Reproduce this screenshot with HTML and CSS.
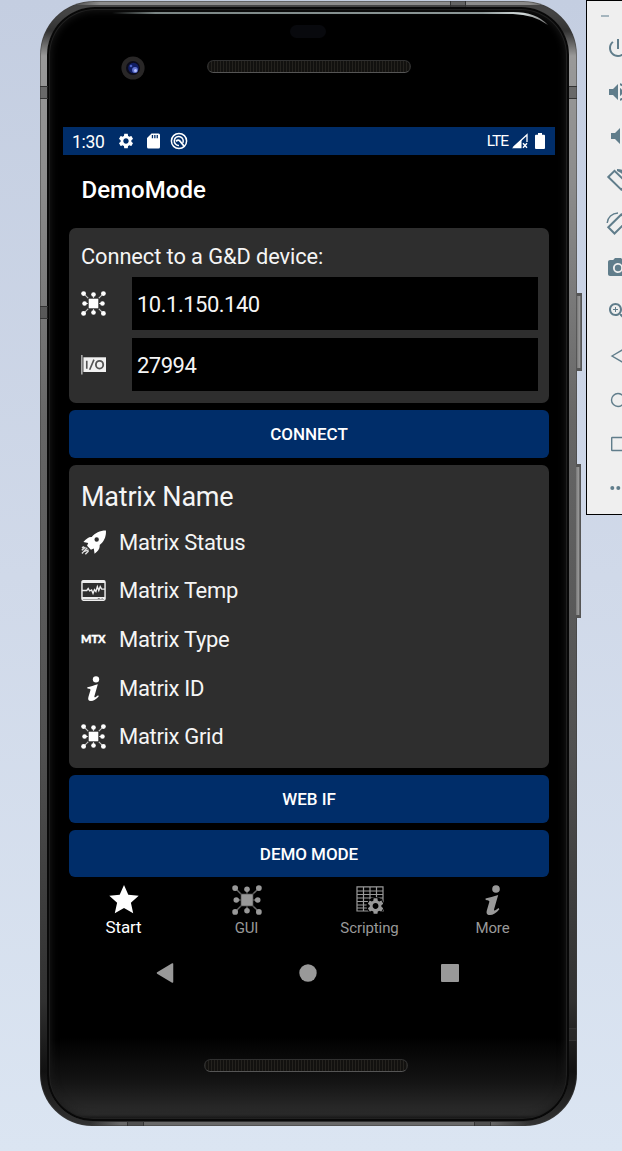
FILE: index.html
```html
<!DOCTYPE html>
<html lang="en">
<head>
<meta charset="utf-8">
<title>DemoMode</title>
<link rel="stylesheet" href="styles.css">
</head>
<body>
<svg class="defs" aria-hidden="true">
  <symbol id="hub" viewBox="0 0 26 26">
    <path d="M3 3l20 20M23 3L3 23M13 3v20M3 13h20" stroke="currentColor" stroke-width="1.200" opacity=".7"/>
    <path class="hub-gap" d="M7.300 7.300h11.400v11.400H7.300z"/>
    <path d="M8 8h10v10H8z" fill="currentColor"/>
    <g fill="currentColor"><circle cx="2.700" cy="2.700" r="2.500"/><circle cx="23.300" cy="2.700" r="2.500"/><circle cx="2.700" cy="23.300" r="2.500"/><circle cx="23.300" cy="23.300" r="2.500"/><circle cx="13" cy="3.700" r="2.400"/><circle cx="13" cy="22.300" r="2.400"/><circle cx="3.700" cy="13" r="2.400"/><circle cx="22.300" cy="13" r="2.400"/></g>
  </symbol>
  <symbol id="info" viewBox="0 0 26 26">
    <circle cx="15.600" cy="3.500" r="3.300" fill="currentColor"/>
    <path d="M6.500 11.600c3.200-.3 7.200-1.800 11-2.900L14 20.700c-.4 1.500.4 1.700 1.700.8l2.100-1.500.7 1c-2.500 3.200-5.500 5-8.200 5-2.700 0-3.300-1.800-2.600-4.200l2.100-7c.3-1.200-.4-1.700-3.100-1.900z" fill="currentColor"/>
  </symbol>
  <symbol id="gear" viewBox="0 0 24 24">
    <path fill="currentColor" d="M19.14 12.94c.04-.3.06-.61.06-.94 0-.32-.02-.64-.07-.94l2.030-1.580c.18-.14.23-.41.12-.61l-1.920-3.320c-.12-.22-.37-.29-.59-.22l-2.390.96c-.5-.38-1.030-.7-1.620-.94l-.36-2.540c-.04-.24-.24-.41-.48-.41h-3.840c-.24 0-.43.17-.47.41l-.36 2.540c-.59.24-1.130.57-1.620.94l-2.390-.96c-.22-.08-.47 0-.59.22L2.740 8.870c-.12.21-.08.47.12.61l2.030 1.580c-.05.3-.09.63-.09.94s.02.64.07.94l-2.030 1.580c-.18.14-.23.41-.12.61l1.920 3.320c.12.22.37.29.59.22l2.390-.96c.5.38 1.030.7 1.620.94l.36 2.540c.05.24.24.41.48.41h3.840c.24 0 .44-.17.47-.41l.36-2.540c.59-.24 1.130-.56 1.620-.94l2.390.96c.22.08.47 0 .59-.22l1.920-3.320c.12-.22.07-.47-.12-.61l-2.010-1.580zM12 15.600c-1.980 0-3.600-1.620-3.600-3.600s1.620-3.600 3.600-3.600 3.600 1.620 3.600 3.600-1.620 3.600-3.600 3.600z"/>
  </symbol>
</svg>

<main class="desktop">
  <section class="phone">
    <i class="seam seam-top"></i><i class="seam seam-left"></i><i class="seam seam-left low"></i><i class="seam seam-right"></i><i class="seam seam-right low"></i><i class="seam seam-bottom"></i><i class="seam seam-bottom end"></i>
    <i class="side-key power"></i><i class="side-key volume"></i>
    <div class="glass">
      <svg class="shine" viewBox="0 0 480 24" width="480" height="24"><defs><linearGradient id="g" gradientUnits="userSpaceOnUse" x1="32" x2="468" y1="0" y2="0"><stop offset="0" stop-color="#7b8685" stop-opacity="0"/><stop offset=".1" stop-color="#7b8685"/><stop offset=".85" stop-color="#8d9898"/><stop offset=".94" stop-color="#d5dddd"/><stop offset="1" stop-color="#777"/></linearGradient></defs><path d="M32 5H433Q456 5 468 18Q454 7.500 433 7H32z" fill="url(#g)"/></svg>
      <header class="bezel-top">
        <i class="sensor"></i>
        <div class="ear-row">
          <svg class="camera" viewBox="0 0 24 24"><circle cx="12" cy="12" r="11.600" fill="#292727"/><circle cx="12" cy="12" r="7" fill="#0b0b19"/><circle cx="12.500" cy="12" r="5.300" fill="#101d63"/><circle cx="14" cy="14" r="2.900" fill="#6274cf"/><circle cx="14.500" cy="14.500" r="1.500" fill="#b4c2ff"/><circle cx="10" cy="10" r="1.300" fill="#4960be"/></svg>
          <i class="speaker"></i>
        </div>
      </header>

      <div class="screen">
        <div class="status">
          <span class="clock">1:30</span>
          <svg class="s-gear" width="18" height="18"><use href="#gear"/></svg>
          <svg class="s-card" width="13" height="16" viewBox="0 0 13 16"><path fill="#fff" fill-rule="evenodd" d="M4.500.5H11.500Q13 .5 13 2V14Q13 15.500 11.500 15.500H1.500Q0 15.500 0 14V5zM4.800 2v3.200h1.300V2zM7.200 2v3.200h1.300V2zM9.600 2v3.200h1.300V2z"/></svg>
          <svg class="s-debug" width="18" height="18" viewBox="0 0 18 18" fill="none" stroke="#fff"><circle cx="9" cy="9" r="7.600" stroke-width="1.500"/><path d="M12.800 11A4.500 4.500 0 1 0 9 13.500" stroke-width="1.500"/><path d="M6 9.300Q8.500 6.800 10.300 9.500L14 14" stroke-width="1.900"/></svg>
          <span class="lte">LTE</span>
          <svg class="s-signal" width="17" height="16" viewBox="0 0 17 16"><path d="M1.500 14.300L15 1.800V9" fill="none" stroke="#fff" stroke-width="1.300"/><path d="M0 15.300L9.500 6.500V15.300z" fill="#fff"/><path d="M11 10.300l4 4.500m0-4.500l-4 4.500" stroke="#fff" stroke-width="1.400"/></svg>
          <svg class="s-battery" width="10" height="16" viewBox="0 0 10 16"><path fill="#fff" d="M3 0h4v1.700h2q1 0 1 1V15q0 1-1 1H1q-1 0-1-1V2.700q0-1 1-1h2z"/></svg>
        </div>
        <h1 class="title">DemoMode</h1>

        <div class="content">
          <section class="card connect-card">
            <p class="prompt">Connect to a G&amp;D device:</p>
            <div class="field"><svg class="icon"><use href="#hub"/></svg><div class="input">10.1.150.140</div></div>
            <div class="field"><svg class="icon" viewBox="0 0 26 26"><path d="M.9 3v20.500" stroke="#ccc" stroke-width="1.300"/><path d="M2.500 5.500H26V20.800H2.500z" fill="#f2f2f2"/><path d="M6 9v8.500M9 18.500L13.500 8" stroke="#555" stroke-width="1.700"/><ellipse cx="19.300" cy="13.200" rx="3.800" ry="4" fill="none" stroke="#555" stroke-width="1.900"/></svg><div class="input">27994</div></div>
          </section>
          <button class="btn">CONNECT</button>
          <section class="card info-card">
            <h2 class="name">Matrix Name</h2>
            <div class="row"><svg class="icon" viewBox="0 0 26 26"><path fill="#fff" fill-rule="evenodd" d="M25.900.4C19.500.4 14.600 3 11.200 7.200 7.900 7 5.200 9.200 2.500 12.500l5 .9-1.200 3.100 4 4 3-1.200.8 5.300c3.400-2.700 5.800-5.300 5.300-9C24 12 26.400 6.700 25.900.4zM16.300 7.500a2.300 2.300 0 1 1 0 4.600 2.300 2.300 0 0 1 0-4.600z"/><path d="M1 24.500l5.500-6M.8 21l3.800-3.200M4.500 25.200l3.300-3.400M1 18.500l2-1.300M2 22.700l6-2" stroke="#ddd" stroke-width="1.500"/></svg>Matrix Status</div>
            <div class="row"><svg class="icon" viewBox="0 0 26 26"><rect x="1" y="2.800" width="24" height="20.400" rx="1.500" fill="none" stroke="#eee" stroke-width="1.500"/><path d="M1 4h24M1 21h24" stroke="#eee" stroke-width="2.400"/><path d="M17.500 21.300h2M21.500 21.300h1" stroke="#777"/><path d="M1 13h5l1.500-2 1.500 2.500 2-1 1.500 3.500 1.500-4 1.500 2 1.500-5 1.500 4 1.500-4 1.500 2.500H25" fill="none" stroke="#eee" stroke-width="1.400"/></svg>Matrix Temp</div>
            <div class="row"><span class="icon mtx">MTX</span>Matrix Type</div>
            <div class="row"><svg class="icon"><use href="#info"/></svg>Matrix ID</div>
            <div class="row"><svg class="icon"><use href="#hub"/></svg>Matrix Grid</div>
          </section>
          <button class="btn">WEB IF</button>
          <button class="btn">DEMO MODE</button>
        </div>

        <nav class="tabs">
          <a class="tab active"><svg class="tab-icon" viewBox="0 0 30 30"><path fill="currentColor" d="M15 0l4.300 9.700 10.400 1.100-7.800 7 2.300 10.500L15 22.900l-9.200 5.400L8.100 17.800l-7.800-7 10.400-1.100z"/></svg>Start</a>
          <a class="tab"><svg class="tab-icon"><use href="#hub"/></svg>GUI</a>
          <a class="tab"><svg class="tab-icon" viewBox="0 0 30 30"><path d="M2 1.800H28V26H2zM2 6H28M2 9.500H28M2 13H28M2 16.500H20M2 20H17M2 23H17M8.500 2V26M15 2V26M21.500 2V16" fill="none" stroke="currentColor" stroke-width="1.200"/><circle cx="20.500" cy="21" r="9" fill="#000"/><use href="#gear" x="10.800" y="11.300" width="19.500" height="19.500"/></svg>Scripting</a>
          <a class="tab"><svg class="tab-icon"><use href="#info"/></svg>More</a>
        </nav>
        <div class="keys">
          <svg width="18" height="20" viewBox="0 0 18 20"><path d="M1.500 10L16.500 1V19z" fill="#999" stroke="#999" stroke-linejoin="round" stroke-width="1.500"/></svg>
          <svg width="18" height="18" viewBox="0 0 18 18"><circle cx="9" cy="9" r="8.700" fill="#999"/></svg>
          <svg width="18" height="18" viewBox="0 0 18 18"><rect width="18" height="18" rx="1" fill="#999"/></svg>
        </div>
      </div>
      <footer class="bezel-bottom"><i class="speaker"></i></footer>
    </div>
  </section>

  <aside class="toolbar">
    <i class="minimize"></i>
    <svg viewBox="0 0 24 24"><path d="M13 3h-2v10h2V3zm4.830 2.170l-1.420 1.420C17.990 7.860 19 9.810 19 12c0 3.870-3.130 7-7 7s-7-3.130-7-7c0-2.190 1.010-4.140 2.580-5.420L6.170 5.170C4.230 6.820 3 9.260 3 12c0 4.970 4.030 9 9 9s9-4.030 9-9c0-2.740-1.230-5.180-3.170-6.830z"/></svg>
    <svg viewBox="0 0 24 24"><path d="M3 9v6h4l5 5V4L7 9H3zm13.500 3c0-1.770-1.020-3.290-2.500-4.030v8.050c1.480-.73 2.500-2.250 2.500-4.020zM14 3.230v2.060c2.890.86 5 3.540 5 6.710s-2.110 5.850-5 6.710v2.060c4.010-.91 7-4.490 7-8.770s-2.990-7.860-7-8.770z"/></svg>
    <svg viewBox="0 0 24 24"><path d="M18.500 12c0-1.770-1.020-3.290-2.500-4.030v8.050c1.480-.73 2.500-2.250 2.500-4.020zM5 9v6h4l5 5V4L9 9H5z"/></svg>
    <svg viewBox="0 0 24 24"><path d="M2.300 9L8.500 2.800L21.500 15.500L15.300 21.700z" fill="none" stroke="#607d8b" stroke-width="2"/><path d="M11 1c7 0 11 4 12 10h-2l-6-6-4-2z"/></svg>
    <svg viewBox="0 0 24 24"><path d="M2.300 15.300L15.300 2.500L21.500 8.700L8.500 21.500z" fill="none" stroke="#607d8b" stroke-width="2"/><path d="M1.200 11C1.500 5.500 6 1.300 12 1" fill="none" stroke="#607d8b" stroke-width="1.400"/></svg>
    <svg viewBox="0 0 24 24"><circle cx="12" cy="12" r="3.200"/><path d="M9 2L7.170 4H4c-1.100 0-2 .9-2 2v12c0 1.100.9 2 2 2h16c1.100 0 2-.9 2-2V6c0-1.100-.9-2-2-2h-3.170L15 2H9zm3 15c-2.760 0-5-2.240-5-5s2.240-5 5-5 5 2.240 5 5-2.240 5-5 5z"/></svg>
    <svg viewBox="0 0 24 24"><path d="M15.500 14h-.79l-.28-.27C15.410 12.590 16 11.110 16 9.500 16 5.910 13.090 3 9.500 3S3 5.910 3 9.500 5.910 16 9.500 16c1.610 0 3.090-.59 4.230-1.570l.27.28v.79l5 4.990L20.490 19l-4.990-5zm-6 0C7.010 14 5 11.990 5 9.500S7.010 5 9.500 5 14 7.010 14 9.500 11.990 14 9.500 14zM12 10h-2v2H9v-2H7V9h2V7h1v2h2v1z"/></svg>
    <svg viewBox="0 0 24 24"><path d="M6 12L18 5V19z" fill="none" stroke="#607d8b" stroke-width="1.400"/></svg>
    <svg viewBox="0 0 24 24"><circle cx="12" cy="12" r="6.500" fill="none" stroke="#607d8b" stroke-width="1.400"/></svg>
    <svg viewBox="0 0 24 24"><rect x="5.700" y="5.500" width="13" height="13" rx=".5" fill="none" stroke="#607d8b" stroke-width="1.400"/></svg>
    <svg viewBox="0 0 24 24"><circle cx="6.300" cy="12" r="2"/><circle cx="12.300" cy="12" r="2"/><circle cx="18.300" cy="12" r="2"/></svg>
  </aside>
</main>
</body>
</html>
```

FILE: styles.css
```css
* { box-sizing: border-box; }
body { margin: 0; font-family: Roboto, "Liberation Sans", sans-serif; }
.defs { position: absolute; width: 0; height: 0; }
.hub-gap { fill: #2e2e2e; }

.desktop {
  position: relative;
  height: 1151px;
  overflow: hidden;
  background: linear-gradient(#c4cee1, #d0d9e9 50%, #dbe5f2);
  padding: 1px 0 0 40px;
}

.phone {
  position: relative;
  width: 537px;
  height: 1125px;
  padding: 6px 8px 5px 7px;
  border-radius: 54px 54px 52px 52px;
  background:
    linear-gradient(90deg, transparent 50px, #686868 80px, #686868 450px, transparent 490px) bottom / 100% 4px no-repeat,
    linear-gradient(90deg, transparent 30px, #8c8c8c 60px, #8c8c8c 490px, transparent 520px) top / 100% 4px no-repeat,
    linear-gradient(#444 12px, #333 30px, #999 55px, #8c8c8c 180px, #666 420px, #505050 750px, #303030 1000px, #111 1070px, #333 1125px);
  box-shadow: inset 0 0 0 1px rgba(60, 60, 60, .5);
}
.glass {
  display: flex;
  flex-direction: column;
  height: 100%;
  border-radius: 48px 48px 46px 46px;
  padding: 0 15px 0 16px;
  background:
    linear-gradient(transparent 1030px, #141414 1075px, #2d2d2d 1108px, #111 1112px),
    #000;
  box-shadow: inset 0 0 0 2px #080808, inset 0 0 0 3px #202020, inset 0 0 8px 3px #1c1c1c;
}
.shine { position: absolute; left: 40px; top: 6px; }

.seam { position: absolute; background: rgba(50, 50, 50, .45); border: 0 solid #333; }
.seam-top { left: 410px; top: 0; width: 16px; height: 6px; border-width: 0 1px; }
.seam-left { left: 0; top: 85px; width: 8px; height: 13px; border-width: 1px 0; }
.seam-left.low { top: 305px; }
.seam-right { right: 0; top: 85px; width: 8px; height: 13px; border-width: 1px 0; }
.seam-right.low { top: 1027px; }
.seam-bottom { left: 87px; bottom: 0; width: 17px; height: 5px; border-width: 0 1px; }
.seam-bottom.end { left: 434px; }
.side-key {
  position: absolute;
  width: 5px;
  background: linear-gradient(90deg, #777, #999 60%, #555);
  border: 1px solid #555;
  border-width: 3px 1px;
  border-left: 0;
}
.side-key.power { left: 537px; top: 292px; height: 78px; }
.side-key.volume { left: 536px; top: 463px; height: 154px; }

.bezel-top { height: 120px; display: flex; flex-direction: column; padding-top: 18px; }
.sensor { width: 36px; height: 13px; border-radius: 7px; background: #08090d; margin-left: 227px; }
.ear-row { display: flex; align-items: center; gap: 62px; padding: 18px 0 0 58px; }
.camera { width: 24px; height: 24px; }
.speaker {
  width: 204px;
  height: 13px;
  border: 1px solid #303030;
  border-bottom-color: #555;
  border-radius: 7px;
  background: repeating-linear-gradient(90deg, #24221e 0 1px, #12110f 1px 3px);
}
.ear-row .speaker { margin-top: -4px; }
.bezel-bottom { padding: 58px 0 0 141px; display: flex; }

.screen { width: 492px; height: 874px; color: #fff; background: #000; }
.status { height: 28px; background: #002d69; display: flex; align-items: center; padding: 0 10px 0 9px; }
.clock { font-size: 17.500px; width: 45px; letter-spacing: -.3px; padding-top: 1px; }
.s-gear { margin-right: 12px; }
.s-card { margin-right: 10px; }
.lte { font-size: 15.500px; margin-left: auto; letter-spacing: -1px; }
.s-signal { margin: 0 6px 0 4px; }

.title { margin: 0; height: 73px; padding: 0 0 3px 18.500px; display: flex; align-items: center; font-size: 24px; font-weight: 500; letter-spacing: .05px; }
.content { padding: 0 6px; display: flex; flex-direction: column; gap: 7px; }
.card { background: #2e2e2e; border-radius: 7px; padding: 0 11px 0 12px; color: #f5f5f5; }
.connect-card { height: 175px; padding-top: 7px; }
.prompt { margin: 0; height: 42px; line-height: 44px; font-size: 21.800px; letter-spacing: -.08px; }
.field { display: flex; align-items: center; gap: 26px; margin-bottom: 8px; }
.icon { flex: none; width: 25px; height: 25px; color: #fff; }
.input { width: 406px; height: 53px; line-height: 55px; padding-left: 5px; background: #000; font-size: 22px; letter-spacing: -.5px; }
.btn { height: 48px; border: 0; border-radius: 6px; background: #002d69; color: #fff; font: 500 17px Roboto, sans-serif; letter-spacing: -.05px; padding: 1px 0; }
.btn + .btn { height: 47px; }
.info-card { height: 303px; padding-top: 12px; }
.name { margin: 0; height: 41px; line-height: 41px; font-size: 27px; font-weight: 400; letter-spacing: -.22px; }
.row { display: flex; align-items: center; gap: 13px; height: 48.600px; font-size: 22px; letter-spacing: -.32px; }
.mtx { font: 900 11px/23px Lato, sans-serif; letter-spacing: 0; -webkit-text-stroke: .4px #fff; }

.tabs { display: grid; grid-template-columns: repeat(4, 1fr); height: 66px; margin-left: -1px; margin-right: 1px; font-size: 15px; letter-spacing: -.1px; color: #999; }
.tab { display: flex; flex-direction: column; align-items: center; padding-top: 8px; line-height: 26px; }
.tab-icon { width: 30px; height: 30px; }
.tab .hub-gap { fill: #000; }
.active { color: #fff; font-size: 17px; line-height: 24px; }
.keys { display: flex; align-items: center; justify-content: space-between; height: 60px; padding: 0 96px 0 93px; }

.toolbar {
  position: absolute;
  left: 586px;
  top: 0;
  width: 63px;
  height: 515px;
  border: 1px solid #000;
  background: #efefef;
  display: flex;
  flex-direction: column;
  align-items: center;
  fill: #607d8b;
}
.toolbar svg { width: 24px; height: 44px; flex: none; }
.minimize { align-self: flex-start; width: 8px; height: 2px; margin: 14px 0 9px 14px; background: #a5b5be; }
```
